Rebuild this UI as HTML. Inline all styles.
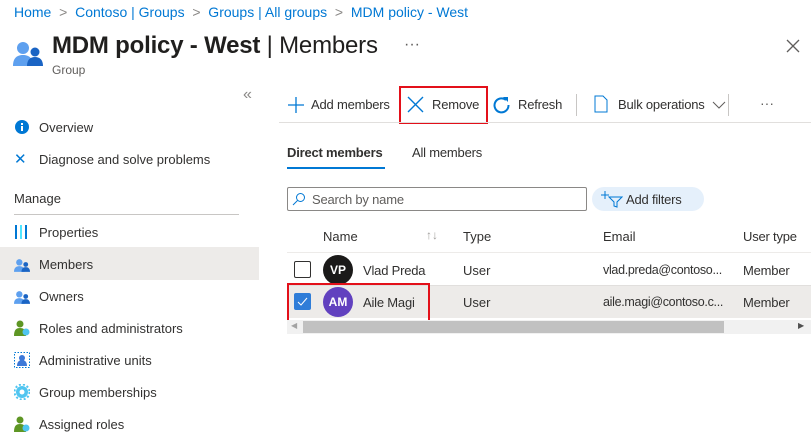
<!DOCTYPE html>
<html><head><meta charset="utf-8"><style>
*{margin:0;padding:0;box-sizing:border-box}
body{width:811px;height:434px;overflow:hidden;background:#fff;font-family:"Liberation Sans",sans-serif;color:#323130;position:relative;font-size:13px}
.a{position:absolute;white-space:nowrap}
.bc{color:#0078d4;font-size:14px;top:4px}
.nav{left:39px;font-size:13px}
.ic{position:absolute;left:14px;width:16px;height:16px}
.t{letter-spacing:-0.2px}
</style></head><body>
<div class="a bc" style="left:14px">Home&nbsp; <span style="color:#8a8886">&gt;</span> &nbsp;Contoso | Groups&nbsp; <span style="color:#8a8886">&gt;</span> &nbsp;Groups | All groups&nbsp; <span style="color:#8a8886">&gt;</span> &nbsp;MDM policy - West</div>
<svg class="a" style="left:13px;top:40px" width="30" height="26" viewBox="0 0 30 26"><circle cx="10" cy="8" r="6" fill="#5ea0ef"/><path d="M0 26c0-8 4-11 10-11s10 3 10 11z" fill="#5ea0ef"/><circle cx="22" cy="12" r="4.5" fill="#1a64c4"/><path d="M14 26c0-6 3-9 8-9s8 3 8 9z" fill="#1a64c4"/></svg>
<div class="a" style="left:52px;top:32px;font-size:24px;color:#201f1e;letter-spacing:-0.2px"><b>MDM policy - West</b> | Members</div>
<div class="a" style="left:404px;top:36px;font-size:16px;color:#605e5c">···</div>
<svg class="a" style="left:786px;top:39px" width="14" height="14"><path d="M1 1L13 13M13 1L1 13" stroke="#605e5c" stroke-width="1.3"/></svg>
<div class="a" style="left:52px;top:63px;font-size:12px;color:#605e5c">Group</div>
<div class="a" style="left:243px;top:86px;font-size:16px;color:#8a8886">«</div>
<svg class="ic" style="top:119px"><circle cx="8" cy="8" r="7" fill="#0078d4"/><rect x="7" y="7" width="2" height="5" fill="#fff"/><rect x="7" y="4" width="2" height="2" fill="#fff"/></svg>
<div class="a nav" style="top:120px">Overview</div>
<div class="a" style="left:14px;top:150px;font-size:15px;color:#0078d4">✕</div>
<div class="a nav" style="top:152px">Diagnose and solve problems</div>
<div class="a" style="left:14px;top:191px;font-size:13px;color:#323130">Manage</div>
<div class="a" style="left:14px;top:214px;width:225px;height:1px;background:#c8c6c4"></div>
<svg class="ic" style="top:224px"><rect x="1" y="1" width="2" height="14" fill="#0078d4"/><rect x="6" y="1" width="2" height="14" fill="#50e6ff"/><rect x="11" y="1" width="2" height="14" fill="#0078d4"/></svg>
<div class="a nav" style="top:225px">Properties</div>
<div class="a" style="left:0;top:247px;width:259px;height:33px;background:#edebe9"></div>
<svg class="ic" style="top:257px" viewBox="0 0 30 26"><circle cx="10" cy="8" r="6" fill="#5ea0ef"/><path d="M0 26c0-8 4-11 10-11s10 3 10 11z" fill="#5ea0ef"/><circle cx="22" cy="12" r="4.5" fill="#1a64c4"/><path d="M14 26c0-6 3-9 8-9s8 3 8 9z" fill="#1a64c4"/></svg>
<div class="a nav" style="top:257px">Members</div>
<svg class="ic" style="top:289px" viewBox="0 0 30 26"><circle cx="10" cy="8" r="6" fill="#5ea0ef"/><path d="M0 26c0-8 4-11 10-11s10 3 10 11z" fill="#5ea0ef"/><circle cx="22" cy="12" r="4.5" fill="#1a64c4"/><path d="M14 26c0-6 3-9 8-9s8 3 8 9z" fill="#1a64c4"/></svg>
<div class="a nav" style="top:289px">Owners</div>
<svg class="ic" style="top:320px"><circle cx="6" cy="4" r="3.5" fill="#5e9624"/><path d="M0 16c0-6 2-8 6-8s6 2 6 8z" fill="#5e9624"/><circle cx="12" cy="12" r="3.5" fill="#50c5f0"/></svg>
<div class="a nav" style="top:321px">Roles and administrators</div>
<svg class="ic" style="top:352px"><rect x="0.5" y="0.5" width="15" height="15" fill="none" stroke="#0078d4" stroke-dasharray="1.5 1.5"/><circle cx="8" cy="6" r="3" fill="#3c78d8"/><path d="M3 14c0-4 2-6 5-6s5 2 5 6z" fill="#3c78d8"/></svg>
<div class="a nav" style="top:353px">Administrative units</div>
<svg class="ic" style="top:384px"><circle cx="8" cy="8" r="6" fill="#50c5f0"/><circle cx="8" cy="8" r="7.5" fill="none" stroke="#50c5f0" stroke-width="2" stroke-dasharray="2 2"/><circle cx="8" cy="8" r="2.5" fill="#fff"/></svg>
<div class="a nav" style="top:385px">Group memberships</div>
<svg class="ic" style="top:416px"><circle cx="6" cy="4" r="3.5" fill="#5e9624"/><path d="M0 16c0-6 2-8 6-8s6 2 6 8z" fill="#5e9624"/><circle cx="12" cy="12" r="3.5" fill="#50c5f0"/></svg>
<div class="a nav" style="top:417px">Assigned roles</div>

<!-- toolbar -->
<svg class="a" style="left:288px;top:97px" width="16" height="16"><path d="M8 0v16M0 8h16" stroke="#0078d4" stroke-width="1.3"/></svg>
<div class="a t" style="left:311px;top:97px">Add members</div>
<div class="a" style="left:399px;top:86px;width:89px;height:38px;border:2px solid #e3101a"></div>
<svg class="a" style="left:407px;top:96px" width="17" height="17"><path d="M1 1L16 16M16 1L1 16" stroke="#0078d4" stroke-width="1.4"/></svg>
<div class="a t" style="left:432px;top:97px">Remove</div>
<svg class="a" style="left:493px;top:96px" width="18" height="18"><path d="M13 4A7 7 0 1 0 15.5 9" fill="none" stroke="#0078d4" stroke-width="2"/><path d="M10 1h5v5z" fill="#0078d4"/></svg>
<div class="a t" style="left:518px;top:97px">Refresh</div>
<div class="a" style="left:576px;top:94px;width:1px;height:22px;background:#c8c6c4"></div>
<svg class="a" style="left:594px;top:95px" width="14" height="18"><path d="M1 1h8l4 4v12H1z" fill="none" stroke="#0078d4"/></svg>
<div class="a t" style="left:618px;top:97px">Bulk operations</div>
<svg class="a" style="left:712px;top:101px" width="14" height="8"><path d="M1 1l6 6 6-6" fill="none" stroke="#605e5c"/></svg>
<div class="a" style="left:728px;top:94px;width:1px;height:22px;background:#c8c6c4"></div>
<div class="a" style="left:760px;top:95px;font-size:14px;color:#605e5c">···</div>
<div class="a" style="left:279px;top:122px;width:532px;height:1px;background:#e1dfdd"></div>

<div class="a t" style="left:287px;top:145px;font-weight:bold;color:#323130">Direct members</div>
<div class="a" style="left:287px;top:167px;width:98px;height:2px;background:#0078d4"></div>
<div class="a t" style="left:412px;top:145px">All members</div>

<div class="a" style="left:287px;top:187px;width:300px;height:24px;border:1px solid #8a8886;border-radius:2px"></div>
<svg class="a" style="left:292px;top:192px" width="14" height="14"><circle cx="8.5" cy="5.5" r="4" fill="none" stroke="#0078d4"/><path d="M5.5 8.5L1 13" stroke="#0078d4"/></svg>
<div class="a t" style="left:312px;top:192px;color:#605e5c">Search by name</div>
<div class="a" style="left:592px;top:187px;width:112px;height:24px;border-radius:12px;background:#e5f0fb"></div>
<svg class="a" style="left:601px;top:190px" width="22" height="18"><path d="M4 1v8M0 5h8" stroke="#0078d4"/><path d="M8 7h13l-5 5v5l-3-1v-4z" fill="none" stroke="#0078d4"/></svg>
<div class="a t" style="left:626px;top:192px">Add filters</div>

<div class="a" style="left:323px;top:229px">Name</div>
<div class="a" style="left:426px;top:228px;font-size:12px;color:#a19f9d">↑↓</div>
<div class="a" style="left:463px;top:229px">Type</div>
<div class="a" style="left:603px;top:229px">Email</div>
<div class="a t" style="left:743px;top:229px">User type</div>
<div class="a" style="left:287px;top:252px;width:524px;height:1px;background:#edebe9"></div>
<div class="a" style="left:294px;top:261px;width:17px;height:17px;border:1px solid #323130;border-radius:2px"></div>
<div class="a" style="left:323px;top:255px;width:30px;height:30px;border-radius:50%;background:#1b1a19;color:#fff;font-weight:bold;font-size:12px;text-align:center;line-height:30px">VP</div>
<div class="a t" style="left:363px;top:263px">Vlad Preda</div>
<div class="a" style="left:463px;top:263px">User</div>
<div class="a" style="left:603px;top:263px;font-size:12.5px;letter-spacing:-0.3px">vlad.preda@contoso...</div>
<div class="a t" style="left:743px;top:263px">Member</div>
<div class="a" style="left:287px;top:285px;width:524px;height:33px;background:#edebe9;border-top:1px solid #e1dfdd"></div>
<div class="a" style="left:294px;top:293px;width:17px;height:17px;background:#2f7dd8;border-radius:2px"></div>
<svg class="a" style="left:296px;top:296px" width="13" height="11"><path d="M2 6l3 3 6-7" fill="none" stroke="#fff"/></svg>
<div class="a" style="left:323px;top:287px;width:30px;height:30px;border-radius:50%;background:#6141bf;color:#fff;font-weight:bold;font-size:12px;text-align:center;line-height:30px">AM</div>
<div class="a t" style="left:363px;top:295px">Aile Magi</div>
<div class="a" style="left:463px;top:295px">User</div>
<div class="a" style="left:603px;top:295px;font-size:12.5px;letter-spacing:-0.3px">aile.magi@contoso.c...</div>
<div class="a t" style="left:743px;top:295px">Member</div>
<div class="a" style="left:287px;top:283px;width:143px;height:41px;border:2px solid #e3101a"></div>
<div class="a" style="left:287px;top:320px;width:524px;height:14px;background:#f1f1f1"></div>
<div class="a" style="left:303px;top:321px;width:421px;height:12px;background:#c1c1c1"></div>
<div class="a" style="left:291px;top:321px;font-size:8px;color:#a3a3a3">◀</div>
<div class="a" style="left:798px;top:321px;font-size:8px;color:#505050">▶</div>
</body></html>
